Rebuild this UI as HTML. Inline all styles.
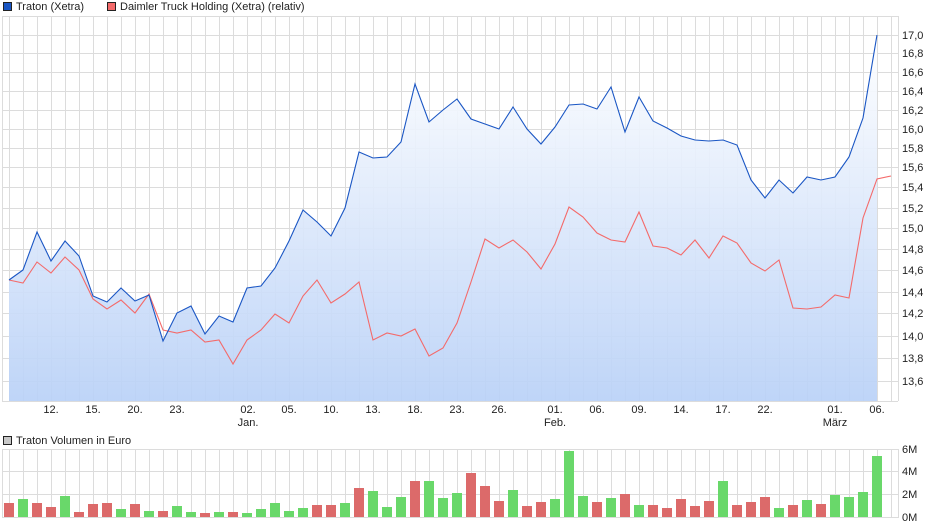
<!DOCTYPE html>
<html><head><meta charset="utf-8"><style>
body{margin:0;background:#fff;width:940px;height:526px;overflow:hidden;font-family:"Liberation Sans",sans-serif}
svg{position:absolute;left:0;top:0}
text{font-family:"Liberation Sans",sans-serif;font-size:11px;fill:#222}
</style></head><body>
<svg width="940" height="526" viewBox="0 0 940 526">
<defs>
<pattern id="vg" x="9" y="0" width="14" height="600" patternUnits="userSpaceOnUse"><rect x="0" y="0" width="1" height="600" fill="#dcdcdc"/></pattern>
<linearGradient id="fg" x1="0" y1="0" x2="0" y2="1"><stop offset="0" stop-color="#ffffff"/><stop offset="1" stop-color="#b9d1f7"/></linearGradient>
</defs>
<!-- legend -->
<rect x="3.5" y="2.5" width="8" height="8" fill="#1a56c4" stroke="#222" stroke-width="1"/>
<text x="16" y="10">Traton (Xetra)</text>
<rect x="107.5" y="2.5" width="8" height="8" fill="#f46a6a" stroke="#222" stroke-width="1"/>
<text x="120" y="10">Daimler Truck Holding (Xetra) (relativ)</text>
<!-- main grid -->
<rect x="2" y="16" width="896" height="385" fill="url(#vg)"/>
<g stroke="#dcdcdc" stroke-width="1">
<line x1="2" y1="16.5" x2="898" y2="16.5"/>
<line x1="2" y1="35.5" x2="898" y2="35.5"/><line x1="2" y1="53.5" x2="898" y2="53.5"/><line x1="2" y1="72.5" x2="898" y2="72.5"/><line x1="2" y1="91.5" x2="898" y2="91.5"/><line x1="2" y1="110.5" x2="898" y2="110.5"/><line x1="2" y1="129.5" x2="898" y2="129.5"/><line x1="2" y1="148.5" x2="898" y2="148.5"/><line x1="2" y1="167.5" x2="898" y2="167.5"/><line x1="2" y1="187.5" x2="898" y2="187.5"/><line x1="2" y1="208.5" x2="898" y2="208.5"/><line x1="2" y1="228.5" x2="898" y2="228.5"/><line x1="2" y1="249.5" x2="898" y2="249.5"/><line x1="2" y1="270.5" x2="898" y2="270.5"/><line x1="2" y1="292.5" x2="898" y2="292.5"/><line x1="2" y1="313.5" x2="898" y2="313.5"/><line x1="2" y1="336.5" x2="898" y2="336.5"/><line x1="2" y1="358.5" x2="898" y2="358.5"/><line x1="2" y1="381.5" x2="898" y2="381.5"/>
<line x1="2" y1="401.5" x2="898" y2="401.5"/>
<line x1="2.5" y1="16" x2="2.5" y2="401"/><line x1="898.5" y1="16" x2="898.5" y2="401"/>
</g>
<polygon fill="url(#fg)" fill-opacity="0.92" points="9,401 9,280 23,270 37,232 51,261 65,241 79,256 93,296 107,302 121,288 135,301 149,295 163,341 177,313 191,306 205,334 219,316 233,322 247,288 261,286 275,268 289,241 303,210 317,222 331,236 345,208 359,152 373,158 387,157 401,142 415,84 429,122 443,110 457,99 471,119 485,124 499,129 513,107 527,129 541,144 555,127 569,105 583,104 597,109 611,87 625,132 639,97 653,121 667,128 681,136 695,140 709,141 723,140 737,145 751,180 765,198 779,180 793,193 807,177 821,180 835,177 849,157 863,118 877,35 877,401"/>
<polyline fill="none" stroke="#f46a6a" stroke-width="1.1" points="9,280 23,283 37,262 51,273 65,257 79,270 93,299 107,309 121,300 135,313 149,294 163,330 177,333 191,330 205,342 219,340 233,364 247,340 261,330 275,314 289,323 303,296 317,280 331,303 345,294 359,282 373,340 387,333 401,336 415,329 429,356 443,348 457,323 471,282 485,239 499,248 513,240 527,252 541,269 555,244 569,207 583,217 597,233 611,240 625,242 639,212 653,246 667,248 681,255 695,240 709,258 723,236 737,243 751,263 765,271 779,260 793,308 807,309 821,307 835,295 849,298 863,218 877,179 891,176"/>
<polyline fill="none" stroke="#1a56c4" stroke-width="1.1" points="9,280 23,270 37,232 51,261 65,241 79,256 93,296 107,302 121,288 135,301 149,295 163,341 177,313 191,306 205,334 219,316 233,322 247,288 261,286 275,268 289,241 303,210 317,222 331,236 345,208 359,152 373,158 387,157 401,142 415,84 429,122 443,110 457,99 471,119 485,124 499,129 513,107 527,129 541,144 555,127 569,105 583,104 597,109 611,87 625,132 639,97 653,121 667,128 681,136 695,140 709,141 723,140 737,145 751,180 765,198 779,180 793,193 807,177 821,180 835,177 849,157 863,118 877,35"/>
<!-- y labels -->
<g>
<text x="902" y="39">17,0</text><text x="902" y="57">16,8</text><text x="902" y="76">16,6</text><text x="902" y="95">16,4</text><text x="902" y="114">16,2</text><text x="902" y="133">16,0</text><text x="902" y="152">15,8</text><text x="902" y="171">15,6</text><text x="902" y="191">15,4</text><text x="902" y="212">15,2</text><text x="902" y="232">15,0</text><text x="902" y="253">14,8</text><text x="902" y="274">14,6</text><text x="902" y="296">14,4</text><text x="902" y="317">14,2</text><text x="902" y="340">14,0</text><text x="902" y="362">13,8</text><text x="902" y="385">13,6</text>
</g>
<!-- x labels -->
<g text-anchor="middle">
<text x="51" y="413">12.</text><text x="93" y="413">15.</text><text x="135" y="413">20.</text><text x="177" y="413">23.</text><text x="248" y="413">02.</text><text x="289" y="413">05.</text><text x="331" y="413">10.</text><text x="373" y="413">13.</text><text x="415" y="413">18.</text><text x="457" y="413">23.</text><text x="499" y="413">26.</text><text x="555" y="413">01.</text><text x="597" y="413">06.</text><text x="639" y="413">09.</text><text x="681" y="413">14.</text><text x="723" y="413">17.</text><text x="765" y="413">22.</text><text x="835" y="413">01.</text><text x="877" y="413">06.</text>
<text x="248" y="426">Jan.</text><text x="555" y="426">Feb.</text><text x="835" y="426">März</text>
</g>
<!-- volume -->
<rect x="3.5" y="436.5" width="8" height="8" fill="#c8c8c8" stroke="#222" stroke-width="1"/>
<text x="16" y="444">Traton Volumen in Euro</text>
<rect x="2" y="449" width="896" height="69" fill="url(#vg)"/>
<g stroke="#dcdcdc" stroke-width="1">
<line x1="2" y1="449.5" x2="898" y2="449.5"/><line x1="2" y1="471.5" x2="898" y2="471.5"/><line x1="2" y1="494.5" x2="898" y2="494.5"/><line x1="2" y1="517.5" x2="898" y2="517.5"/>
<line x1="2.5" y1="449" x2="2.5" y2="518"/><line x1="898.5" y1="449" x2="898.5" y2="518"/>
</g>
<g id="bars"></g>
<text x="902" y="453">6M</text><text x="902" y="475">4M</text><text x="902" y="498">2M</text><text x="902" y="521">0M</text>
</svg>
<script>
var t=[503,499,503,507,496,512,504,503,509,504,511,511,506,512,513,512,512,513,509,503,511,508,505,505,503,488,491,507,497,481,481,498,493,473,486,501,490,506,502,499,451,496,502,498,494,505,505,508,499,506,501,481,505,502,497,508,505,500,504,495,497,492,456];
var c="rgrrgrrrgrgrggrgrgggggrrgrgggrgggrrrgrrgggrgrgrrrrrgrrrgrgrgggg";
var s="";for(var i=0;i<t.length;i++){s+='<rect x="'+(4+14*i)+'" y="'+t[i]+'" width="10" height="'+(517-t[i])+'" fill="'+(c[i]=="g"?"#69d86a":"#dc6a6a")+'"/>';}
document.getElementById("bars").innerHTML=s;
</script>
</body></html>
